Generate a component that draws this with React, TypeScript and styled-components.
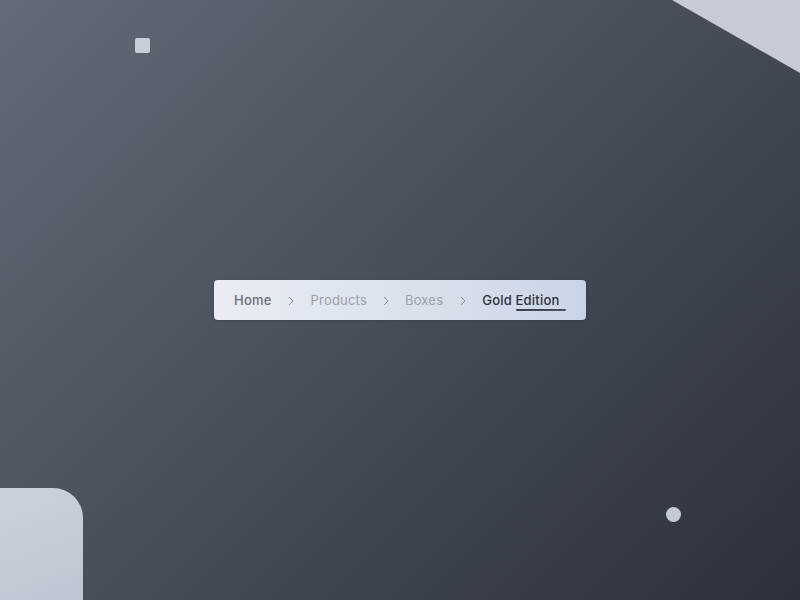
import React from 'react';
import styled, { createGlobalStyle } from 'styled-components';

const GlobalStyle = createGlobalStyle`
  html, body {
    margin: 0;
    padding: 0;
    height: 100%;
  }
  #root {
    height: 100%;
  }
`;

const Page = styled.div`
  position: relative;
  width: 800px;
  height: 600px;
  overflow: hidden;
  background: linear-gradient(135deg, #646a77 0%, #4a505c 45%, #2c313b 100%);
  display: flex;
  align-items: center;
  justify-content: center;
  font-family: 'Inter', 'Noto Sans', sans-serif;
`;

const Triangle = styled.div`
  position: absolute;
  top: 0;
  right: 0;
  width: 128px;
  height: 73px;
  background: #c6cbd4;
  clip-path: polygon(0 0, 100% 0, 100% 100%);
`;

const Block = styled.div`
  position: absolute;
  left: 0;
  top: 488px;
  width: 83px;
  height: 140px;
  border-top-right-radius: 30px;
  background: linear-gradient(160deg, #ccd2dc 0%, #b9c3d0 100%);
`;

const Square = styled.div`
  position: absolute;
  left: 135px;
  top: 38px;
  width: 15px;
  height: 15px;
  border-radius: 2px;
  background: #c8ced9;
`;

const Dot = styled.div`
  position: absolute;
  left: 666px;
  top: 507px;
  width: 15px;
  height: 15px;
  border-radius: 50%;
  background: #c3cad6;
`;

const Crumbs = styled.nav`
  display: flex;
  align-items: center;
  height: 40px;
  width: 372px;
  box-sizing: border-box;
  padding: 0 20px;
  border-radius: 4px;
  background: linear-gradient(90deg, #e9edf3 0%, #dbe2ec 50%, #c9d5e6 100%);
  box-shadow: 0 1px 3px rgba(0, 0, 0, 0.15);
`;

const Crumb = styled.span<{ $tone: 'home' | 'muted' | 'current' }>`
  position: relative;
  font-size: 13px;
  letter-spacing: 0.2px;
  font-weight: ${({ $tone }) => ($tone === 'muted' ? 400 : 500)};
  color: ${({ $tone }) =>
    $tone === 'home' ? '#6c7079' : $tone === 'muted' ? '#9b9fa7' : '#2f333c'};
`;

const Underline = styled.span`
  position: absolute;
  right: -6px;
  bottom: -3px;
  width: 50px;
  height: 2px;
  border-radius: 1px;
  background: linear-gradient(90deg, #3a3f4a, #4a505c);
`;

const Sep = styled.svg`
  width: 8px;
  height: 10px;
  margin-top: 2px;
  flex-shrink: 0;
`;

const Gap = styled.span<{ $w: number }>`
  display: inline-flex;
  justify-content: center;
  width: ${({ $w }) => $w}px;
`;

const Chevron = ({ w }: { w: number }) => (
  <Gap $w={w}>
    <Sep viewBox="0 0 8 10">
      <path d="M2 1 L6 5 L2 9" fill="none" stroke="#8a8f98" strokeWidth="1" />
    </Sep>
  </Gap>
);

export default function App() {
  return (
    <>
      <GlobalStyle />
      <Page>
        <Triangle />
        <Block />
        <Square />
        <Dot />
        <Crumbs>
          <Crumb $tone="home">Home</Crumb>
          <Chevron w={39} />
          <Crumb $tone="muted">Products</Crumb>
          <Chevron w={38} />
          <Crumb $tone="muted">Boxes</Crumb>
          <Chevron w={39} />
          <Crumb $tone="current">
            Gold Edition
            <Underline />
          </Crumb>
        </Crumbs>
      </Page>
    </>
  );
}
